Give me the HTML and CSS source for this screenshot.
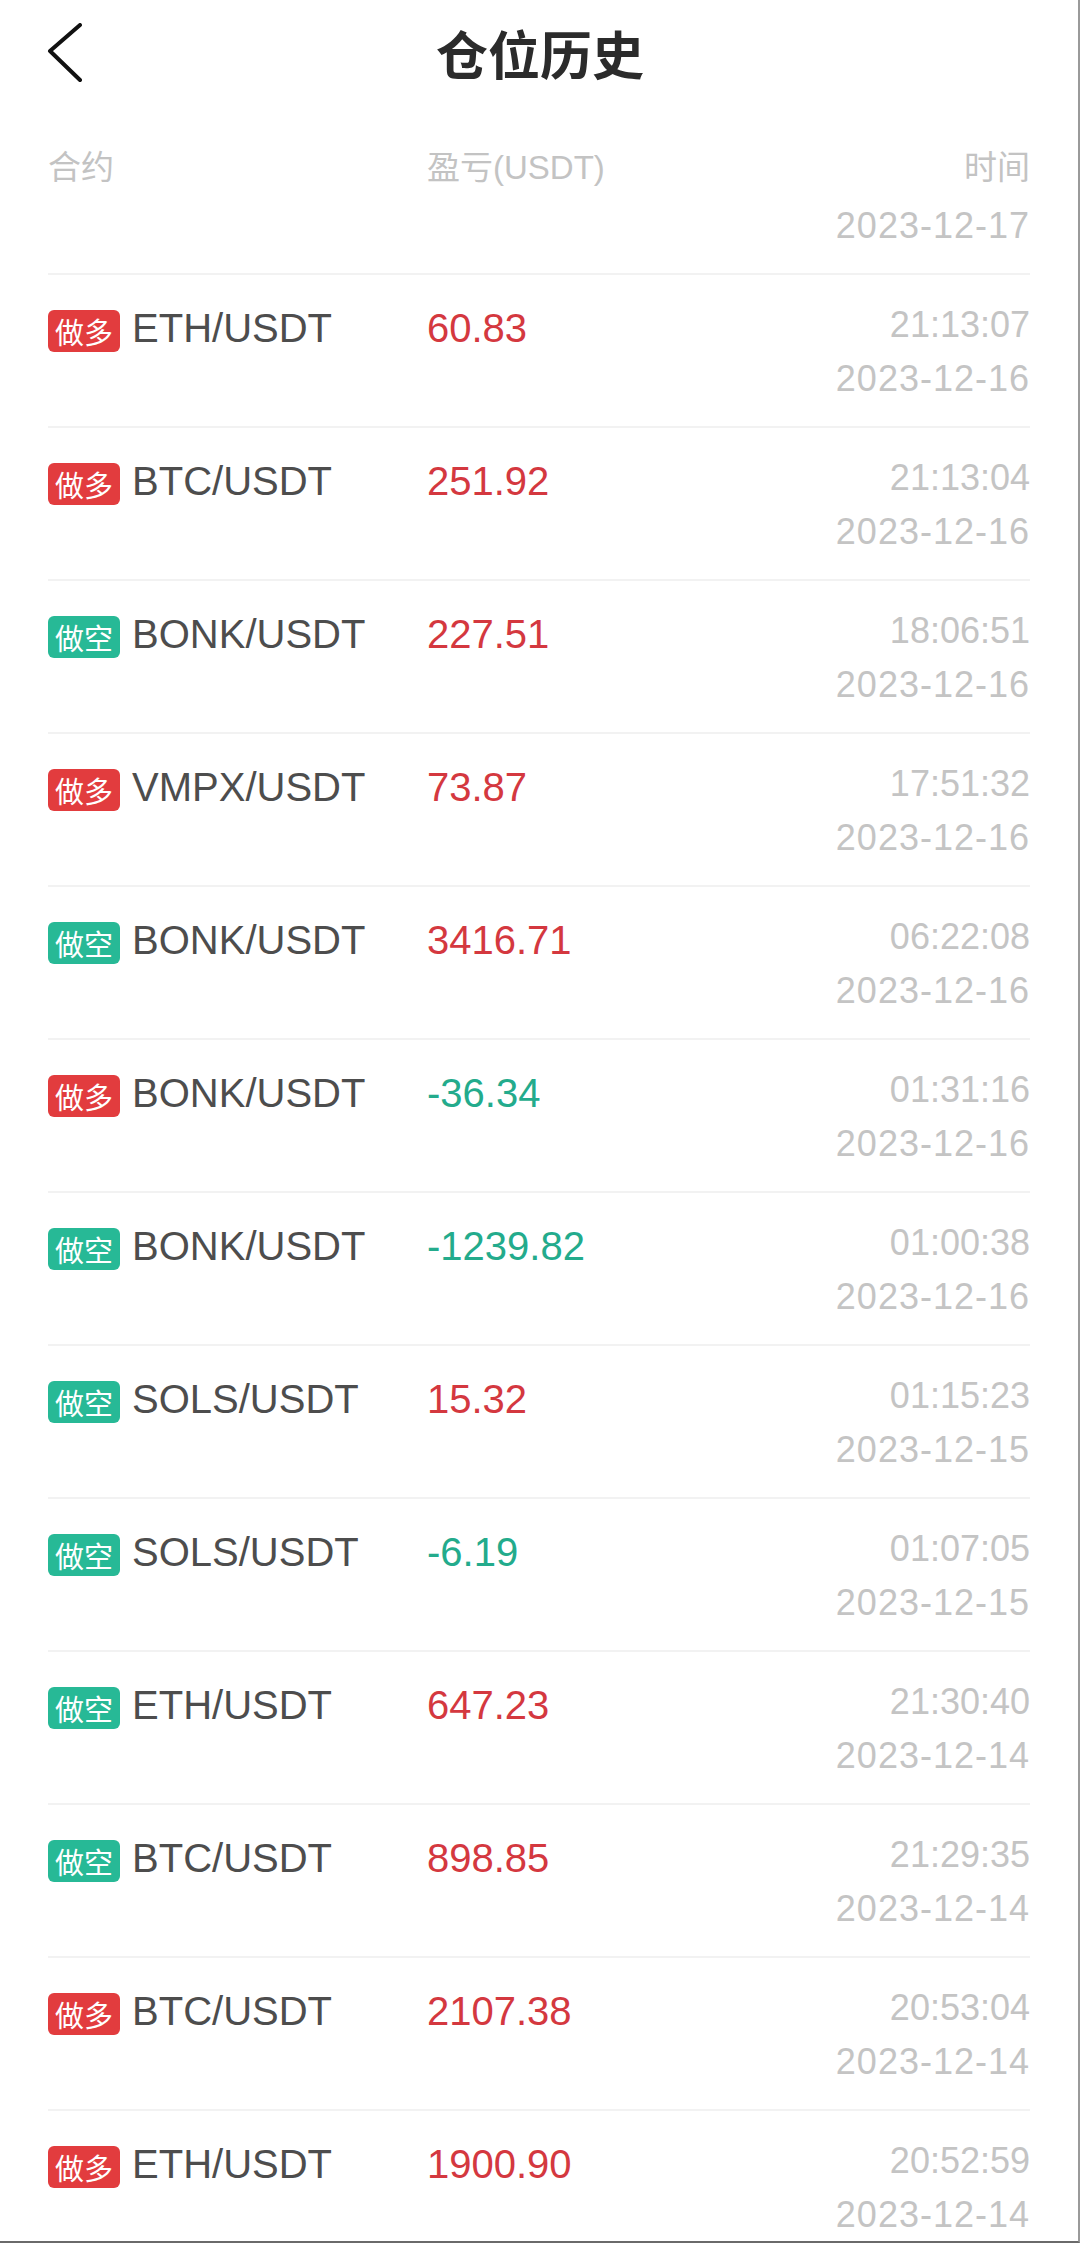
FILE: index.html
```html
<!DOCTYPE html>
<html lang="zh-CN">
<head>
  <meta charset="UTF-8">
  <title>仓位历史</title>
  <link rel="stylesheet" href="styles.css">
</head>
<body>
  <div class="topbar">
    <div class="back">
      <svg width="40" height="60" viewBox="0 0 40 60">
        <path d="M34 2 L4 28 L34 57" fill="none" stroke="#111" stroke-width="4" stroke-linecap="round" stroke-linejoin="round"/>
      </svg>
    </div>
    <h1>仓位历史</h1>
    <div></div>
  </div>

  <div class="list">
    <div class="thead">
      <div class="labels">
        <span>合约</span>
        <span>盈亏(USDT)</span>
        <span class="right">时间</span>
      </div>
      <div class="date">2023-12-17</div>
    </div>

    <div class="row">
      <div class="pair"><span class="tag long">做多</span><span class="name">ETH/USDT</span></div>
      <div class="pnl up">60.83</div>
      <div class="when"><div class="time">21:13:07</div><div class="date">2023-12-16</div></div>
    </div>
    <div class="row">
      <div class="pair"><span class="tag long">做多</span><span class="name">BTC/USDT</span></div>
      <div class="pnl up">251.92</div>
      <div class="when"><div class="time">21:13:04</div><div class="date">2023-12-16</div></div>
    </div>
    <div class="row">
      <div class="pair"><span class="tag short">做空</span><span class="name">BONK/USDT</span></div>
      <div class="pnl up">227.51</div>
      <div class="when"><div class="time">18:06:51</div><div class="date">2023-12-16</div></div>
    </div>
    <div class="row">
      <div class="pair"><span class="tag long">做多</span><span class="name">VMPX/USDT</span></div>
      <div class="pnl up">73.87</div>
      <div class="when"><div class="time">17:51:32</div><div class="date">2023-12-16</div></div>
    </div>
    <div class="row">
      <div class="pair"><span class="tag short">做空</span><span class="name">BONK/USDT</span></div>
      <div class="pnl up">3416.71</div>
      <div class="when"><div class="time">06:22:08</div><div class="date">2023-12-16</div></div>
    </div>
    <div class="row">
      <div class="pair"><span class="tag long">做多</span><span class="name">BONK/USDT</span></div>
      <div class="pnl down">-36.34</div>
      <div class="when"><div class="time">01:31:16</div><div class="date">2023-12-16</div></div>
    </div>
    <div class="row">
      <div class="pair"><span class="tag short">做空</span><span class="name">BONK/USDT</span></div>
      <div class="pnl down">-1239.82</div>
      <div class="when"><div class="time">01:00:38</div><div class="date">2023-12-16</div></div>
    </div>
    <div class="row">
      <div class="pair"><span class="tag short">做空</span><span class="name">SOLS/USDT</span></div>
      <div class="pnl up">15.32</div>
      <div class="when"><div class="time">01:15:23</div><div class="date">2023-12-15</div></div>
    </div>
    <div class="row">
      <div class="pair"><span class="tag short">做空</span><span class="name">SOLS/USDT</span></div>
      <div class="pnl down">-6.19</div>
      <div class="when"><div class="time">01:07:05</div><div class="date">2023-12-15</div></div>
    </div>
    <div class="row">
      <div class="pair"><span class="tag short">做空</span><span class="name">ETH/USDT</span></div>
      <div class="pnl up">647.23</div>
      <div class="when"><div class="time">21:30:40</div><div class="date">2023-12-14</div></div>
    </div>
    <div class="row">
      <div class="pair"><span class="tag short">做空</span><span class="name">BTC/USDT</span></div>
      <div class="pnl up">898.85</div>
      <div class="when"><div class="time">21:29:35</div><div class="date">2023-12-14</div></div>
    </div>
    <div class="row">
      <div class="pair"><span class="tag long">做多</span><span class="name">BTC/USDT</span></div>
      <div class="pnl up">2107.38</div>
      <div class="when"><div class="time">20:53:04</div><div class="date">2023-12-14</div></div>
    </div>
    <div class="row">
      <div class="pair"><span class="tag long">做多</span><span class="name">ETH/USDT</span></div>
      <div class="pnl up">1900.90</div>
      <div class="when"><div class="time">20:52:59</div><div class="date">2023-12-14</div></div>
    </div>
  </div>

  <div class="frame"></div>
</body>
</html>
```

FILE: styles.css
```css
body {
  margin: 0;
  background: #fff;
  font-family: "Liberation Sans", "Noto Sans CJK SC", sans-serif;
  color: #4a4a4a;
}

.topbar {
  height: 105px;
  display: grid;
  grid-template-columns: 1fr auto 1fr;
  align-items: center;
}

.back {
  padding-left: 46px;
  display: flex;
  align-items: center;
}

.back svg {
  display: block;
}

h1 {
  margin: 0;
  font-family: "Noto Sans CJK SC", sans-serif;
  font-size: 52px;
  font-weight: 700;
  color: #2b2b2b;
  line-height: 60px;
}

.list {
  padding: 0 50px 0 48px;
}

.thead {
  padding-top: 41px;
  padding-bottom: 20px;
  border-bottom: 2px solid #f2f2f2;
}

.labels {
  display: grid;
  grid-template-columns: 379px 1fr auto;
  height: 44px;
  line-height: 44px;
  font-size: 33px;
  color: #c3c3c3;
}

.labels .right {
  text-align: right;
}

.thead .date {
  margin-top: 9px;
  text-align: right;
}

.date,
.time {
  font-size: 36px;
  line-height: 54px;
  color: #c4c4c4;
}

.date {
  letter-spacing: 1px;
}

.row {
  display: grid;
  grid-template-columns: 379px 1fr auto;
  align-items: start;
  padding-top: 23px;
  padding-bottom: 20px;
  border-bottom: 2px solid #f2f2f2;
}

.pair {
  margin-top: 8px;
  height: 44px;
  display: flex;
  align-items: center;
}

.tag {
  margin-top: 6px;
  height: 42px;
  line-height: 42px;
  padding: 0 7px;
  border-radius: 6px;
  font-family: "Noto Sans CJK SC", sans-serif;
  font-size: 29px;
  color: #fff;
}

.tag.long {
  background: #e23c3e;
}

.tag.short {
  background: #27b996;
}

.name {
  margin-left: 12px;
  font-size: 40px;
  line-height: 44px;
  color: #4d4d4d;
}

.pnl {
  margin-top: 8px;
  font-size: 40px;
  line-height: 44px;
}

.pnl.up {
  color: #d4383f;
}

.pnl.down {
  color: #23ab8c;
}

.when {
  text-align: right;
}

.frame {
  position: fixed;
  inset: 0;
  border-right: 2px solid #9a9a9a;
  border-bottom: 2px solid #6a6a6a;
  pointer-events: none;
}
```
